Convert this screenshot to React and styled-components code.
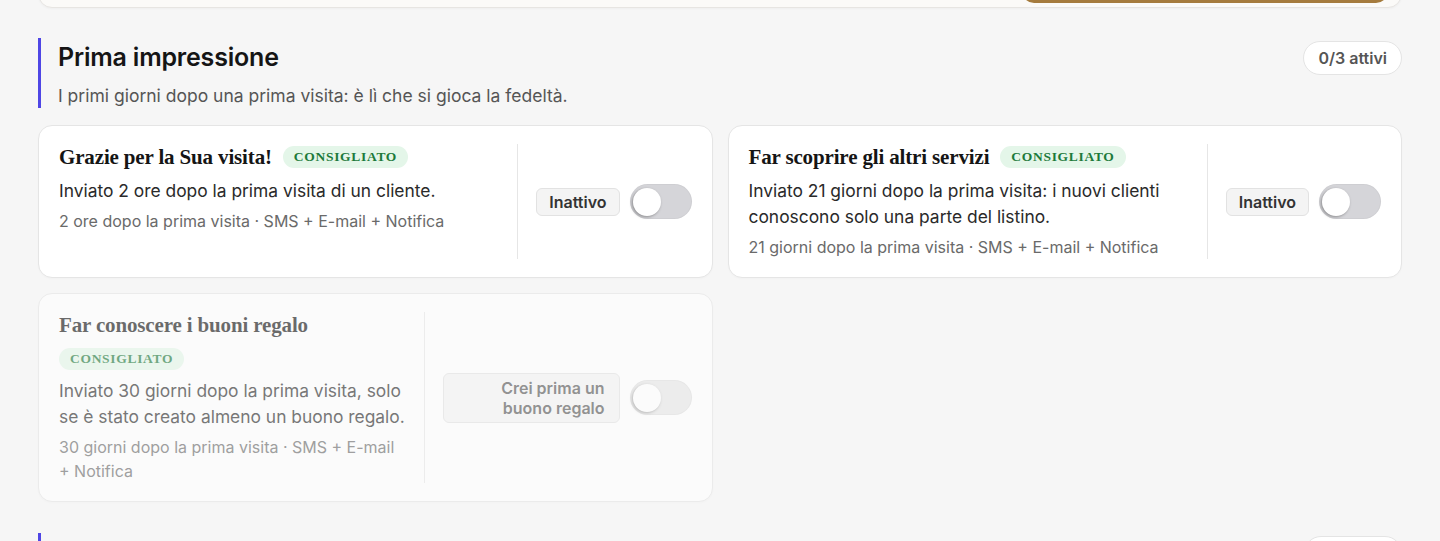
import React from "react";
import styled, { createGlobalStyle } from "styled-components";

const GlobalStyle = createGlobalStyle`
  html, body { margin: 0; padding: 0; background: #f6f6f6; }
  body { font-family: Inter, "Noto Sans", sans-serif; color: #1a1a1a; overflow: hidden; }
  * { box-sizing: border-box; }
`;

const Page = styled.div`
  display: flex;
  flex-direction: column;
  gap: 30px;
  padding: 0 38px;
  margin-top: -60px;
`;

const PrevCard = styled.div`
  height: 68px;
  background: #fbfaf8;
  border: 1px solid #e7e5e2;
  border-radius: 14px;
  display: flex;
  justify-content: flex-end;
  align-items: flex-end;
  padding: 0 13px 4px 0;
  box-shadow: 0 1px 2px rgba(0, 0, 0, 0.03);
`;

const BronzeButton = styled.div`
  width: 366px;
  height: 46px;
  border-radius: 12px;
  background: #a57b3d;
`;

const Section = styled.section`
  display: flex;
  flex-direction: column;
  gap: 17px;
  & + & {
    margin-top: 1px;
  }
`;

const Header = styled.header`
  display: flex;
  justify-content: space-between;
  align-items: flex-start;
  border-left: 3px solid #4f46e5;
  padding: 4px 0 0 17px;
`;

const HeaderText = styled.div`
  display: flex;
  flex-direction: column;
  gap: 12px;
`;

const SectionTitle = styled.h2`
  margin: 0;
  font-size: 25px;
  line-height: 30px;
  font-weight: 600;
  letter-spacing: -0.2px;
  color: #151515;
`;

const SectionSub = styled.p`
  margin: 0;
  font-size: 17.5px;
  line-height: 24px;
  color: #555;
`;

const CountPill = styled.span`
  margin-top: -1px;
  height: 34px;
  display: inline-flex;
  align-items: center;
  padding: 0 14px;
  border-radius: 17px;
  background: #fff;
  border: 1px solid #e4e4e4;
  font-size: 16px;
  font-weight: 600;
  color: #555;
`;

const Grid = styled.div`
  display: grid;
  grid-template-columns: 1fr 1fr;
  gap: 15px;
  align-items: start;
`;

const Card = styled.article`
  display: flex;
  align-items: stretch;
  align-self: stretch;
  background: #fff;
  border: 1px solid #e5e5e5;
  border-radius: 14px;
  padding: 18px 20px 18px 20px;
  opacity: ${(p) => (p.$disabled ? 0.62 : 1)};
  box-shadow: 0 1px 2px rgba(0, 0, 0, 0.02);
`;

const Body = styled.div`
  flex: 1;
  min-width: 0;
  padding-right: 16px;
  display: flex;
  flex-direction: column;
`;

const TitleRow = styled.div`
  display: flex;
  flex-wrap: wrap;
  align-items: center;
  gap: 10px 11px;
  min-height: 26px;
`;

const CardTitle = styled.h3`
  margin: 0;
  font-family: "Liberation Serif", "DejaVu Serif", serif;
  font-size: 21px;
  line-height: 26px;
  font-weight: 700;
  letter-spacing: -0.15px;
  color: #151515;
`;

const Tag = styled.span`
  height: 22px;
  display: inline-flex;
  align-items: center;
  padding: 0 11px;
  border-radius: 11px;
  background: #e4f6e9;
  color: #1d7a3b;
  font-family: "Liberation Serif", "DejaVu Serif", serif;
  font-size: 13.5px;
  font-weight: 700;
  letter-spacing: 0.7px;
`;

const Desc = styled.p`
  margin: 8px 0 0;
  font-size: 17.4px;
  line-height: 26px;
  color: #2a2a2a;
`;

const Meta = styled.p`
  margin: 5px 0 0;
  font-size: 16px;
  line-height: 24px;
  color: #6a6a6a;
`;

const Side = styled.div`
  display: flex;
  align-items: center;
  gap: 10px;
  border-left: 1px solid #e6e6e6;
  padding-left: 18px;
`;

const StatusBox = styled.span`
  display: inline-flex;
  align-items: center;
  justify-content: flex-end;
  text-align: right;
  width: ${(p) => (p.$wide ? "177px" : "auto")};
  min-height: 28px;
  padding: ${(p) => (p.$wide ? "4px 14px 4px 30px" : "0 12px")};
  border-radius: 6px;
  background: #f4f4f4;
  border: 1px solid #e2e2e2;
  font-size: 16px;
  line-height: 20px;
  font-weight: 600;
  color: ${(p) => (p.$wide ? "#555" : "#333")};
`;

const Track = styled.span`
  position: relative;
  flex: none;
  width: 62px;
  height: 35px;
  border-radius: 18px;
  background: ${(p) => (p.$disabled ? "#e6e6e6" : "#d5d5d9")};
  box-shadow: inset 0 0 0 1px rgba(0, 0, 0, 0.03);
`;

const Knob = styled.span`
  position: absolute;
  top: 3.5px;
  left: 3px;
  width: 28px;
  height: 28px;
  border-radius: 50%;
  background: #fff;
  box-shadow: -1px 1px 3px rgba(0, 0, 0, 0.35);
`;

const Toggle = ({ disabled }) => (
  <Track $disabled={disabled}>
    <Knob />
  </Track>
);

const cards = [
  {
    title: "Grazie per la Sua visita!",
    desc: "Inviato 2 ore dopo la prima visita di un cliente.",
    meta: "2 ore dopo la prima visita · SMS + E-mail + Notifica",
    status: "Inattivo",
  },
  {
    title: "Far scoprire gli altri servizi",
    desc: "Inviato 21 giorni dopo la prima visita: i nuovi clienti conoscono solo una parte del listino.",
    meta: "21 giorni dopo la prima visita · SMS + E-mail + Notifica",
    status: "Inattivo",
  },
  {
    title: "Far conoscere i buoni regalo",
    desc: "Inviato 30 giorni dopo la prima visita, solo se è stato creato almeno un buono regalo.",
    meta: "30 giorni dopo la prima visita · SMS + E-mail + Notifica",
    status: "Crei prima un buono regalo",
    disabled: true,
  },
];

export default function App() {
  return (
    <>
      <GlobalStyle />
      <Page>
        <PrevCard>
          <BronzeButton />
        </PrevCard>
        <Section>
          <Header>
            <HeaderText>
              <SectionTitle>Prima impressione</SectionTitle>
              <SectionSub>
                I primi giorni dopo una prima visita: è lì che si gioca la fedeltà.
              </SectionSub>
            </HeaderText>
            <CountPill>0/3 attivi</CountPill>
          </Header>
          <Grid>
            {cards.map((c) => (
              <Card key={c.title} $disabled={c.disabled}>
                <Body>
                  <TitleRow>
                    <CardTitle>{c.title}</CardTitle>
                    <Tag>CONSIGLIATO</Tag>
                  </TitleRow>
                  <Desc>{c.desc}</Desc>
                  <Meta>{c.meta}</Meta>
                </Body>
                <Side>
                  <StatusBox $wide={c.disabled}>{c.status}</StatusBox>
                  <Toggle disabled={c.disabled} />
                </Side>
              </Card>
            ))}
          </Grid>
        </Section>
        <Section>
          <Header>
            <HeaderText>
              <SectionTitle>Riportare i clienti</SectionTitle>
              <SectionSub>Clienti che non tornano da un po'.</SectionSub>
            </HeaderText>
            <CountPill>0/2 attivi</CountPill>
          </Header>
        </Section>
      </Page>
    </>
  );
}
